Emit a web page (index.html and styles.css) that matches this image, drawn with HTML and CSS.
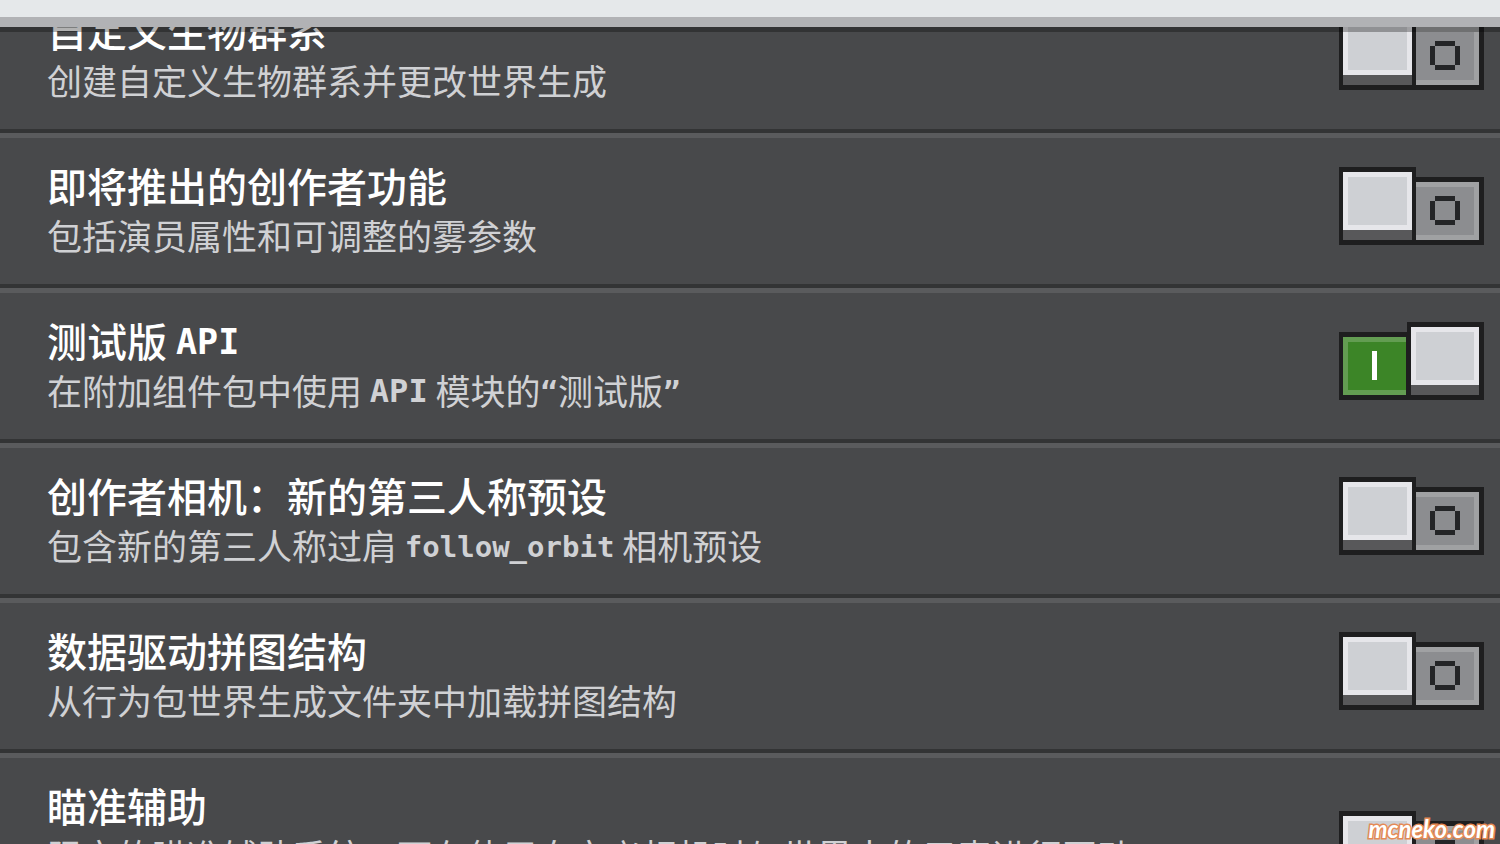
FILE: index.html
```html
<!DOCTYPE html>
<html lang="zh-CN">
  <head>
    <meta charset="UTF-8" />
    <meta name="viewport" content="width=device-width, initial-scale=1.0" />
    <title>实验性玩法</title>
    <link rel="stylesheet" href="styles.css">
  </head>
  <body>
    <!-- toggle artwork, shared by every row -->
    <svg width="0" height="0" class="sprites" shape-rendering="crispEdges">
      <symbol id="toggle-off" viewBox="0 0 145 78">
        <path fill="#1e1e1f" d="M0 0h77v10h68v68H0z" />
        <path fill="#e6e6ea" d="M4 5h69v58H4z" />
        <path fill="#ced0d4" d="M9 10h59v48H9z" />
        <path fill="#58585a" d="M4 63h69v10H4z" />
        <path fill="#a0a1a3" d="M77 15h63v58H77z" />
        <path fill="#8c8d90" d="M77 20h58v48H77z" />
        <path fill="#242527" d="M96 29h20v5H96zM96 53h20v5H96zM91 34h5v19h-5zM116 34h5v19h-5z" />
      </symbol>
      <symbol id="toggle-on" viewBox="0 0 145 78">
        <path fill="#1e1e1f" d="M0 10h68V0h77v78H0z" />
        <path fill="#639d52" d="M4 15h63v58H4z" />
        <path fill="#3c8527" d="M9 20h58v48H9z" />
        <path fill="#ffffff" d="M33 29h5v29h-5z" />
        <path fill="#e6e6ea" d="M72 5h68v58H72z" />
        <path fill="#ced0d4" d="M77 10h58v48H77z" />
        <path fill="#58585a" d="M72 63h68v10H72z" />
      </symbol>
    </svg>

    <div class="topbar"></div>

    <main class="list">
      <label class="row">
        <span class="text">
          <span class="title">自定义生物群系</span>
          <span class="desc">创建自定义生物群系并更改世界生成</span>
        </span>
        <span class="toggle">
          <input type="checkbox" />
          <svg class="off"><use href="#toggle-off" /></svg>
          <svg class="on"><use href="#toggle-on" /></svg>
        </span>
      </label>

      <label class="row">
        <span class="text">
          <span class="title">即将推出的创作者功能</span>
          <span class="desc">包括演员属性和可调整的雾参数</span>
        </span>
        <span class="toggle">
          <input type="checkbox" />
          <svg class="off"><use href="#toggle-off" /></svg>
          <svg class="on"><use href="#toggle-on" /></svg>
        </span>
      </label>

      <label class="row">
        <span class="text">
          <span class="title">测试版 <span class="latin">API</span></span>
          <span class="desc">在附加组件包中使用 <span class="latin caps">API</span> 模块的<span class="latin">“</span>测试版<span class="latin">”</span></span>
        </span>
        <span class="toggle">
          <input type="checkbox" checked />
          <svg class="off"><use href="#toggle-off" /></svg>
          <svg class="on"><use href="#toggle-on" /></svg>
        </span>
      </label>

      <label class="row">
        <span class="text">
          <span class="title">创作者相机：新的第三人称预设</span>
          <span class="desc">包含新的第三人称过肩 <span class="latin">follow_orbit</span> 相机预设</span>
        </span>
        <span class="toggle">
          <input type="checkbox" />
          <svg class="off"><use href="#toggle-off" /></svg>
          <svg class="on"><use href="#toggle-on" /></svg>
        </span>
      </label>

      <label class="row">
        <span class="text">
          <span class="title">数据驱动拼图结构</span>
          <span class="desc">从行为包世界生成文件夹中加载拼图结构</span>
        </span>
        <span class="toggle">
          <input type="checkbox" />
          <svg class="off"><use href="#toggle-off" /></svg>
          <svg class="on"><use href="#toggle-on" /></svg>
        </span>
      </label>

      <label class="row tall">
        <span class="text">
          <span class="title">瞄准辅助</span>
          <span class="desc">限定的瞄准辅助系统，可在使用自定义相机时与世界中的元素进行互动</span>
        </span>
        <span class="toggle">
          <input type="checkbox" />
          <svg class="off"><use href="#toggle-off" /></svg>
          <svg class="on"><use href="#toggle-on" /></svg>
        </span>
      </label>
    </main>

    <div class="watermark">mcneko.com</div>
  </body>
</html>
```

FILE: styles.css
```css
* {
  box-sizing: border-box;
}

body {
  margin: 0;
  height: 100vh;
  overflow: hidden;
  position: relative;
  background-color: #48494b;
  font-family: "Noto Sans CJK SC", sans-serif;
}

.sprites {
  position: absolute;
}

.topbar {
  position: absolute;
  top: 0;
  left: 0;
  right: 0;
  z-index: 1;
  height: 27px;
  background-color: #e5e8ea;
  border-bottom: 10px solid #b1b2b5;
  box-shadow: 0 5px 0 rgba(0, 0, 0, 0.3);
}

.list {
  margin-top: -22px;
}

.row {
  display: flex;
  justify-content: space-between;
  align-items: flex-start;
  min-height: 155px;
  padding: 22px 16px 0 47px;
  background-color: #48494b;
  border-top: 5px solid #5a5b5d;
  border-bottom: 4px solid #333435;
  cursor: pointer;
}

.text {
  display: flex;
  flex-direction: column;
  white-space: nowrap;
}

.title {
  height: 50px;
  font-size: 40px;
  font-weight: 500;
  line-height: 50px;
  color: #ffffff;
}

.desc {
  height: 50px;
  font-size: 35px;
  line-height: 50px;
  color: #d0d1d4;
}

.latin {
  font-family: "DejaVu Sans Mono", monospace;
  font-size: 35px;
  font-weight: bold;
  line-height: 1;
  vertical-align: 3px;
}

.desc .latin {
  font-size: 29px;
}

.desc .caps {
  font-size: 32px;
}

.toggle {
  position: relative;
  flex: none;
  width: 145px;
  height: 78px;
  margin-top: 7px;
}

.tall {
  min-height: 205px;
}

.tall .toggle {
  margin-top: 31px;
}

.toggle input {
  position: absolute;
  width: 100%;
  height: 100%;
  margin: 0;
  opacity: 0;
  cursor: pointer;
}

.toggle svg {
  display: block;
  width: 145px;
  height: 78px;
}

.toggle .on,
.toggle input:checked ~ .off {
  display: none;
}

.toggle input:checked ~ .on {
  display: block;
}

.watermark {
  position: absolute;
  right: 5px;
  bottom: 1px;
  font-family: Lato, sans-serif;
  font-size: 24px;
  font-style: italic;
  font-weight: bold;
  line-height: 28px;
  color: #ffffff;
  -webkit-text-stroke: 3px #e58a55;
  paint-order: stroke fill;
}
```
